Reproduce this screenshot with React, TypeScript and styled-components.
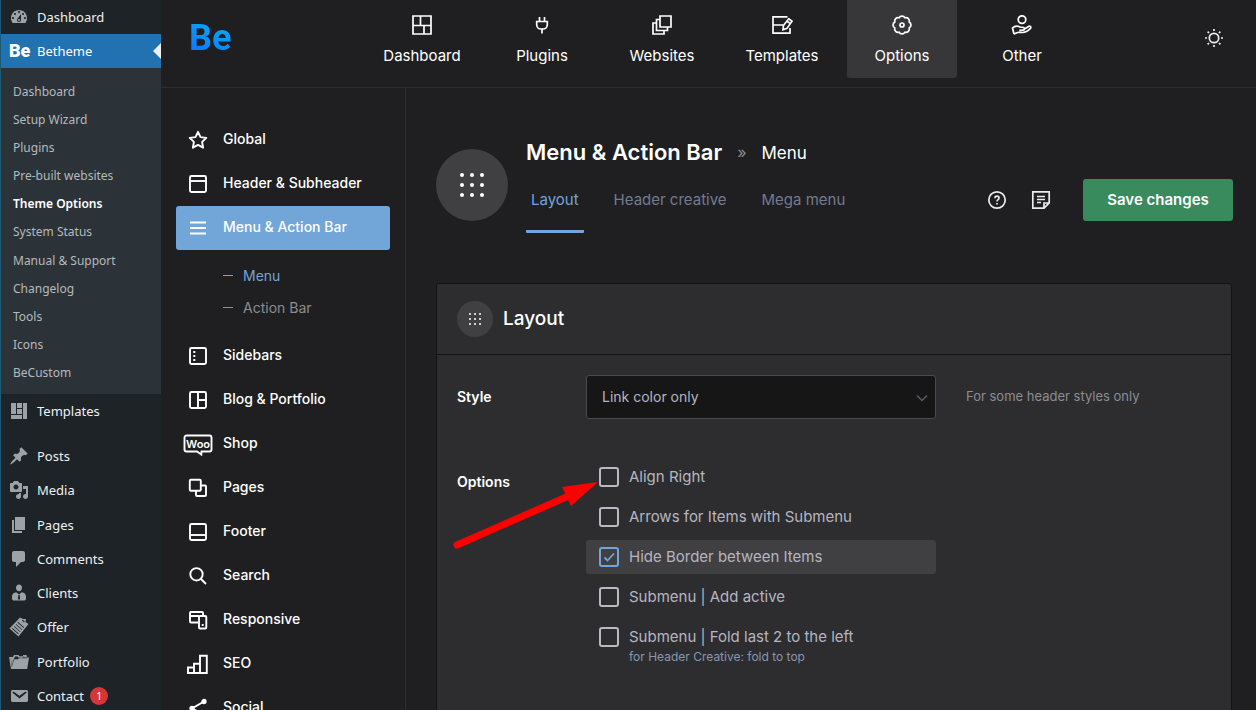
import React from "react";
import styled, { createGlobalStyle, css } from "styled-components";

const ui = `Inter, "Liberation Sans", sans-serif`;
const wp = `"Noto Sans", "Open Sans", sans-serif`;

const c = {
  bg: "#1f1f21",
  line: "#2c2c2e",
  panel: "#2d2d2f",
  panelLine: "#131315",
  raised: "#404042",
  blue: "#72a5d8",
  text: "#b6b5c1",
  muted: "#8c8c91",
};

const GlobalStyle = createGlobalStyle`
  * { box-sizing: border-box; }
  body { margin: 0; background: ${c.bg}; font-family: ${ui}; color: #fff; }
  ul { list-style: none; margin: 0; padding: 0; }
  a { color: inherit; text-decoration: none; }
  h1, h2, p { margin: 0; }
  button, select, input { font: inherit; margin: 0; }
  svg { display: block; flex: none; }
`;

const Shell = styled.div`
  display: flex;
  height: 100vh;
  overflow: hidden;
`;

/* ---------- WordPress admin menu ---------- */

const AdminMenu = styled.nav`
  flex: none;
  width: 161px;
  background: #1d2327;
  border-left: 1px solid #1b5a75;
  font-family: ${wp};
`;

const AdminGroup = styled.ul<{ $height?: number }>`
  display: grid;
  grid-auto-rows: 1fr;
  min-height: ${(p) => (p.$height ? `${p.$height}px` : "auto")};
`;

const AdminLink = styled.a<{ $active?: boolean }>`
  position: relative;
  display: flex;
  align-items: center;
  height: 34px;
  padding-left: 8px;
  gap: 8px;
  font-size: 13px;
  line-height: 18px;
  color: #f0f0f1;
  ${(p) =>
    p.$active &&
    css`
      background: #2271b1;
      color: #fff;
      &::after {
        content: "";
        position: absolute;
        right: 0;
        top: 9px;
        border: 8px solid transparent;
        border-left-width: 0;
        border-right-color: #f0f0f1;
      }
    `}
`;

const AdminIcon = styled.svg`
  width: 20px;
  height: 20px;
  fill: #9ca2a7;
`;

const AdminLogo = styled.span`
  width: 20px;
  font: 900 18px/20px Roboto, sans-serif;
`;

const SubMenu = styled(AdminGroup)`
  padding: 9px 0 7px;
  background: #2c3338;
`;

const SubLink = styled.a<{ $active?: boolean }>`
  display: flex;
  align-items: center;
  height: 100%;
  padding-left: 12px;
  font-size: 12px;
  color: ${(p) => (p.$active ? "#fff" : "#b4b9be")};
  font-weight: ${(p) => (p.$active ? 600 : 400)};
`;

const Spacer = styled.div`
  height: 11px;
`;

const Count = styled.span`
  width: 18px;
  height: 18px;
  margin-left: -2px;
  border-radius: 9px;
  background: #d63638;
  color: #fff;
  font-size: 11px;
  line-height: 18px;
  text-align: center;
`;

/* ---------- Theme header ---------- */

const Main = styled.div`
  flex: 1;
  min-width: 0;
`;

const Header = styled.header`
  display: flex;
  height: 88px;
  border-bottom: 1px solid ${c.line};
`;

const Brand = styled.a`
  flex: none;
  width: 206px;
  padding: 16px 0 0 28px;
  font: 700 36px/44px Roboto, sans-serif;
  span {
    background: linear-gradient(20deg, #0a7cff 20%, #04b0f8 90%);
    background-clip: text;
    -webkit-background-clip: text;
    color: transparent;
  }
`;

const TopNav = styled.nav`
  display: flex;
  gap: 10px;
`;

const TopLink = styled.a<{ $active?: boolean }>`
  display: flex;
  flex-direction: column;
  align-items: center;
  gap: 9px;
  width: 110px;
  height: 78px;
  padding-top: 13px;
  border-radius: 0 0 3px 3px;
  background: ${(p) => (p.$active ? "#373739" : "transparent")};
  font-size: 15px;
  line-height: 20px;
`;

const LineIcon = styled.svg<{ $weight?: number }>`
  width: 24px;
  height: 24px;
  fill: none;
  stroke: currentColor;
  stroke-width: ${(p) => p.$weight ?? 1.7};
  overflow: visible;
`;

const IconButton = styled.button`
  display: grid;
  place-items: center;
  width: 24px;
  height: 24px;
  padding: 0;
  border: 0;
  background: none;
  color: #ececee;
  cursor: pointer;
`;

const ThemeToggle = styled(IconButton)`
  margin: 26px 30px 0 auto;
`;

/* ---------- Options sidebar ---------- */

const Body = styled.div`
  display: flex;
  min-height: 100%;
`;

const Side = styled.nav`
  flex: none;
  width: 245px;
  padding: 30px 15px;
  border-right: 1px solid ${c.line};
`;

const SideLink = styled.a<{ $active?: boolean }>`
  display: grid;
  grid-template-columns: 44px 1fr;
  align-items: center;
  height: 44px;
  padding-right: 8px;
  border-radius: 3px;
  background: ${(p) => (p.$active ? c.blue : "transparent")};
  font-size: 14px;
  font-weight: 500;
  line-height: 20px;
  white-space: nowrap;
  svg {
    justify-self: center;
  }
  span {
    padding: 0 0 2px 3px;
  }
`;

const SideSub = styled.ul`
  padding: 10px 0 10px 47px;
`;

const SideSubLink = styled.a<{ $active?: boolean }>`
  display: flex;
  align-items: center;
  gap: 10px;
  height: 32px;
  padding-bottom: 1px;
  font-size: 14px;
  line-height: 20px;
  color: ${(p) => (p.$active ? c.blue : c.muted)};
  &::before {
    content: "";
    width: 10px;
    height: 1px;
    background: currentColor;
  }
`;

/* ---------- Content ---------- */

const Content = styled.main`
  flex: 1;
  min-width: 0;
  padding: 49px 24px 0 30px;
`;

const TitleBar = styled.div`
  display: flex;
  align-items: center;
  height: 96px;
`;

const Disc = styled.span<{ $size: number }>`
  display: grid;
  place-items: center;
  flex: none;
  width: ${(p) => p.$size}px;
  height: ${(p) => p.$size}px;
  border-radius: 50%;
  background: ${c.raised};
`;

const TitleText = styled.div`
  flex: 1;
  height: 96px;
  padding-left: 18px;
`;

const Crumbs = styled.h1`
  display: flex;
  align-items: center;
  gap: 15px;
  height: 30px;
  font-size: 22px;
  font-weight: 600;
  line-height: 28px;
  white-space: nowrap;
`;

const Separator = styled.span`
  color: ${c.muted};
  font-size: 16px;
  font-weight: 400;
`;

const Crumb = styled.span`
  padding-top: 1px;
  font-size: 17px;
  font-weight: 400;
`;

const Tabs = styled.div`
  display: flex;
  gap: 25px;
`;

const Tab = styled.a<{ $active?: boolean }>`
  height: 66px;
  padding: 23px 5px 0;
  border-bottom: 3px solid ${(p) => (p.$active ? c.blue : "transparent")};
  border-radius: 1px;
  color: ${(p) => (p.$active ? c.blue : "#737b90")};
  font-size: 15px;
  line-height: 20px;
  white-space: nowrap;
`;

const Actions = styled.div`
  display: flex;
  align-items: center;
  gap: 20px;
  padding-top: 30px;
  margin-right: -1px;
`;

const SaveButton = styled.button`
  width: 150px;
  height: 42px;
  margin-left: 10px;
  padding: 0 0 2px;
  border: 0;
  border-radius: 3px;
  background: #398a5d;
  color: #fff;
  font-size: 15px;
  font-weight: 600;
  cursor: pointer;
`;

const Card = styled.section`
  margin-top: 50px;
  min-height: 500px;
  border: 1px solid ${c.panelLine};
  border-radius: 3px;
  background: ${c.panel};
`;

const CardHead = styled.div`
  display: flex;
  align-items: center;
  gap: 10px;
  height: 71px;
  padding: 0 20px;
  border-bottom: 1px solid ${c.panelLine};
`;

const CardTitle = styled.h2`
  font-size: 19px;
  font-weight: 500;
  line-height: 24px;
`;

const Field = styled.div`
  position: relative;
  display: grid;
  grid-template-columns: 129px 350px 1fr;
  padding: 20px 20px 21px;
`;

const FieldName = styled.label`
  padding-top: 12px;
  font-size: 14px;
  font-weight: 600;
  line-height: 20px;
`;

const Hint = styled.p`
  padding: 11px 0 0 30px;
  color: ${c.muted};
  font-size: 13px;
  line-height: 20px;
`;

const SelectBox = styled.div`
  position: relative;
  height: 44px;
  svg {
    position: absolute;
    right: 7px;
    top: 16px;
    color: #5c5c62;
    pointer-events: none;
  }
`;

const Select = styled.select`
  appearance: none;
  width: 100%;
  height: 44px;
  padding: 0 30px 2px 15px;
  border: 1px solid #4a4a4d;
  border-radius: 3px;
  background: #161616;
  color: ${c.text};
  font-size: 14px;
`;

const Choices = styled.ul`
  display: grid;
  gap: 6px;
`;

const Choice = styled.label<{ $on?: boolean }>`
  display: flex;
  gap: 10px;
  min-height: 34px;
  padding: 7px 13px 0;
  border-radius: 3px;
  background: ${(p) => (p.$on ? c.raised : "transparent")};
  color: ${c.text};
  font-size: 15px;
  line-height: 20px;
  small {
    display: block;
    color: #8797b0;
    font-size: 12px;
  }
`;

const Tick = styled.span`
  position: relative;
  width: 20px;
  height: 20px;
  svg {
    position: absolute;
    inset: 0;
    color: ${c.blue};
    pointer-events: none;
  }
`;

const TickInput = styled.input`
  appearance: none;
  display: block;
  width: 20px;
  height: 20px;
  border: 2px solid #b9b8c3;
  border-radius: 3px;
  &:checked {
    border-color: ${c.blue};
  }
`;

const Pointer = styled.svg`
  position: absolute;
  left: 12px;
  top: 38px;
  width: 154px;
  height: 76px;
  pointer-events: none;
`;

/* ---------- Icons ---------- */

const adminPaths: Record<string, string> = {
  Dashboard:
    "M3.76 16h12.48c1.1-1.37 1.76-3.11 1.76-5 0-4.42-3.58-8-8-8s-8 3.58-8 8c0 1.89.66 3.63 1.76 5zM10 4c.55 0 1 .45 1 1s-.45 1-1 1-1-.45-1-1 .45-1 1-1zM6 6c.55 0 1 .45 1 1s-.45 1-1 1-1-.45-1-1 .45-1 1-1zm8 0c.55 0 1 .45 1 1s-.45 1-1 1-1-.45-1-1 .45-1 1-1zm-5.37 5.55L12 7v6c0 1.1-.9 2-2 2s-2-.9-2-2c0-.57.24-1.08.63-1.45zM4 10c.55 0 1 .45 1 1s-.45 1-1 1-1-.45-1-1 .45-1 1-1zm12 0c.55 0 1 .45 1 1s-.45 1-1 1-1-.45-1-1 .45-1 1-1zm-5 3c0-.55-.45-1-1-1s-1 .45-1 1 .45 1 1 1 1-.45 1-1z",
  Templates: "M2 2h5v11H2V2zm6 0h5v5H8V2zm6 0h4v16h-4V2zM8 8h5v5H8V8zm-6 6h11v4H2v-4z",
  Posts:
    "M10.44 3.02l1.82-1.82 6.36 6.35-1.83 1.82c-1.05-.68-2.48-.57-3.41.36l-.75.75c-.92.93-1.04 2.35-.35 3.41l-1.83 1.82-2.41-2.41-2.8 2.79c-.42.42-3.38 2.71-3.8 2.29s1.86-3.39 2.28-3.81l2.79-2.79L4.1 9.36l1.83-1.82c1.05.69 2.48.57 3.4-.36l.75-.75c.93-.92 1.05-2.35.36-3.41z",
  Media:
    "M13 11V4c0-.55-.45-1-1-1h-1.67L9 1H5L3.67 3H2c-.55 0-1 .45-1 1v7c0 .55.45 1 1 1h10c.55 0 1-.45 1-1zM7 4.5c1.38 0 2.5 1.12 2.5 2.5S8.38 9.5 7 9.5 4.5 8.38 4.5 7 5.62 4.5 7 4.5zM14 6h5v10.5c0 1.38-1.12 2.5-2.5 2.5S14 17.88 14 16.5s1.12-2.5 2.5-2.5c.17 0 .34.02.5.05V9h-3V6zm-4 8.05V13h2v3.5c0 1.38-1.12 2.5-2.5 2.5S7 17.88 7 16.5 8.12 14 9.5 14c.17 0 .34.02.5.05z",
  Pages: "M6 15V2h10v13H6zm-1 1h8v2H3V5h2v11z",
  Comments:
    "M5 2h9c1.1 0 2 .9 2 2v7c0 1.1-.9 2-2 2h-2l-5 5v-5H5c-1.1 0-2-.9-2-2V4c0-1.1.9-2 2-2z",
  Clients:
    "M10 1.500c1.800 0 3 1.300 3 3.200S11.800 8.300 10 8.300 7 6.600 7 4.700s1.200-3.200 3-3.200zM7.300 9.200L9.300 11h1.400l2-1.800c2.600.4 4.300 1.800 4.300 4.300v2.500c0 .9-1 1.500-2.200 1.500H5.200C4 17.500 3 16.900 3 16v-2.500c0-2.500 1.700-3.900 4.300-4.300zM9.400 11.700l-.5 4 1.100 1.300 1.100-1.300-.5-4z",
  Offer:
    "M11 .5l3 1.500h3l-.5 3L19.500 7 9.500 19.500.5 11.500zM3 11.700l6.200 5.500.5-.6-6.200-5.500zM4.800 9.600l6.200 5.500.5-.6-6.200-5.500zM6.600 7.500l6.200 5.500.5-.6L7.100 6.900zM8.400 5.400l6.200 5.500.5-.6-6.200-5.500zM13 3.500l2 2 .8-.8-2-2z",
  Portfolio:
    "M0 5h4l1-2h4.500l.8 1.200H14V3h3.500L18 5.500h2L18.200 17H2L0 5zm5.500.8L4.200 8l-1.300 6L2 7.200l-.4-1.500 1.200 9.800L5 7.300h4l.8-1.100H18V5.500h-2.800V4.600h-.8v1.200H9.600L8.800 4.500H6z",
  Contact:
    "M3.870 4h13.250C18.370 4 19 4.590 19 5.790v8.420c0 1.190-.63 1.790-1.880 1.790H3.870c-1.250 0-1.880-.6-1.880-1.790V5.790c0-1.200.63-1.790 1.880-1.790zm6.620 8.600l6.740-5.530c.24-.2.430-.66.130-1.070-.29-.41-.82-.42-1.170-.17l-5.700 3.860L4.800 5.830c-.35-.25-.88-.24-1.170.17-.3.410-.11.870.13 1.070z",
};

/* Eight round lobes with their joints on one circle. */
const cogJoints = Array.from({ length: 8 }, (_, i) => {
  const angle = ((22.5 + i * 45) * Math.PI) / 180;
  return `${(12 + 7.8 * Math.cos(angle)).toFixed(2)} ${(12 + 7.8 * Math.sin(angle)).toFixed(2)}`;
});
const cogPath =
  `M${cogJoints[7]}` + cogJoints.map((point) => `A3.4 3.4 0 0 1 ${point}`).join("") + "z";

const topIcons: Record<string, React.ReactNode> = {
  Dashboard: <path d="M3 3h18v18H3zM3 12.500h18M10.500 3v9.500M14 12.500V21" />,
  Plugins: <path d="M9.500 4v4.500M14.500 4v4.500M6.700 8.500h10.600v3.500a4.200 4.200 0 0 1-4.200 4h-2.200a4.200 4.200 0 0 1-4.200-4zM12 16v4.500" />,
  Websites: <path d="M10 3h11v11H10zM10 6.500H6.500v11h11V14M6.500 10H3v11h11v-3.500" />,
  Templates: (
    <path d="M17.500 3.800H3v16.400h17V15M3 12h10M18.700 5.800l3.300 2.400-5 7.200-4 1.400.4-4.200zM17 8.200l3.400 2.400" />
  ),
  Options: (
    <>
      <path d={cogPath} />
      <circle cx="12" cy="12" r="2" />
    </>
  ),
  Other: (
    <>
      <circle cx="12" cy="6.600" r="3.800" />
      <path d="M4 21l-1.500-6c2.200-2.200 4.800-2.400 7.500-1l3.500.5c1.500.4 1.200 2.500-.2 2.600l-4 .2M14.500 16l4-2.500c1.700-.8 3 .6 1.900 1.900-2.700 2.800-5.200 4.100-7.900 4.100-2.200 0-3.500-.5-5 0L4 21" />
    </>
  ),
};

const frame = <rect x="4" y="4" width="16" height="16" rx="1.500" />;

const sideIcons: Record<string, React.ReactNode> = {
  Global: <path d="M12 3.800l2.500 5.300 5.800.8-4.200 4 1 5.800L12 16.900l-5.100 2.800 1-5.800-4.200-4 5.800-.8z" strokeLinejoin="round" />,
  "Header & Subheader": <>{frame}<path d="M4 9h16" /></>,
  "Menu & Action Bar": <path d="M4 6.500h16M4 12h16M4 17.500h16" />,
  Sidebars: <>{frame}<path d="M7.300 8h2M7.300 12h2M7.300 16h2" /></>,
  "Blog & Portfolio": <>{frame}<path d="M12 4v16M12 12h8" /></>,
  Shop: (
    <>
      <path d="M.500 3.500h23a2 2 0 0 1 2 2v12a2 2 0 0 1-2 2h-8l-.2 3-4.300-3H.500a2 2 0 0 1-2-2v-12a2 2 0 0 1 2-2z" />
      <text x="12" y="15.500" textAnchor="middle" fill="currentColor" stroke="none" fontFamily="Inter, sans-serif" fontSize="11" fontWeight="600">
        Woo
      </text>
    </>
  ),
  Pages: (
    <>
      <rect x="3.800" y="3.800" width="11" height="11" rx="1" />
      <path d="M15 9.500h4a1 1 0 0 1 1 1V19a1 1 0 0 1-1 1h-8a1 1 0 0 1-1-1v-4" />
    </>
  ),
  Footer: <>{frame}<path d="M4 15h16" /></>,
  Search: (
    <>
      <circle cx="10.500" cy="10.300" r="6.200" />
      <path d="M15 15l5 5" />
    </>
  ),
  Responsive: (
    <>
      <path d="M12.500 14.500H5a1 1 0 0 1-1-1V5a1 1 0 0 1 1-1h11a1 1 0 0 1 1 1v3M4 8h9" />
      <rect x="13" y="8" width="7.300" height="12.500" rx="1" />
      <path d="M16.700 16v2" />
    </>
  ),
  SEO: <path d="M2 15.500h6V21H2zM8 11.800h6V21H8zM14 3.800h6.800V21H14z" />,
  Social: (
    <>
      <path d="M18 5.500L6 12.500l12 6" />
      <circle cx="18" cy="5.500" r="1.700" fill="currentColor" />
      <circle cx="6" cy="12.500" r="1.700" fill="currentColor" />
      <circle cx="18" cy="18.500" r="1.700" fill="currentColor" />
    </>
  ),
};

const Dots = ({ step, r }: { step: number; r: number }) => {
  const size = step * 2 + r * 2;
  return (
    <svg width={size} height={size} fill="#fff" aria-hidden="true">
      {[0, 1, 2].map((y) =>
        [0, 1, 2].map((x) => <circle key={`${x}${y}`} cx={r + x * step} cy={r + y * step} r={r} />)
      )}
    </svg>
  );
};

const AdminItem = ({ name, count }: { name: string; count?: number }) => (
  <li>
    <AdminLink href="#">
      <AdminIcon viewBox="0 0 20 20" fillRule="evenodd" aria-hidden="true">
        <path d={adminPaths[name]} />
      </AdminIcon>
      {name}
      {count && <Count>{count}</Count>}
    </AdminLink>
  </li>
);

const SideItem = ({ name, active }: { name: string; active?: boolean }) => (
  <li>
    <SideLink href="#" $active={active}>
      <LineIcon viewBox="0 0 24 24" $weight={1.9} aria-hidden="true">
        {sideIcons[name]}
      </LineIcon>
      <span>{name}</span>
    </SideLink>
  </li>
);

const submenu = [
  "Dashboard", "Setup Wizard", "Plugins", "Pre-built websites", "Theme Options", "System Status",
  "Manual & Support", "Changelog", "Tools", "Icons", "BeCustom",
];

const choices: { name: string; note?: string; on?: boolean }[] = [
  { name: "Align Right" },
  { name: "Arrows for Items with Submenu" },
  { name: "Hide Border between Items", on: true },
  { name: "Submenu | Add active" },
  { name: "Submenu | Fold last 2 to the left", note: "for Header Creative: fold to top" },
];

export default function App() {
  return (
    <Shell>
      <GlobalStyle />
      <AdminMenu aria-label="Admin">
        <AdminGroup>
          <AdminItem name="Dashboard" />
          <li>
            <AdminLink href="#" $active>
              <AdminLogo>Be</AdminLogo>
              Betheme
            </AdminLink>
          </li>
        </AdminGroup>
        <SubMenu $height={326}>
          {submenu.map((name) => (
            <li key={name}>
              <SubLink href="#" $active={name === "Theme Options"}>{name}</SubLink>
            </li>
          ))}
        </SubMenu>
        <AdminGroup>
          <AdminItem name="Templates" />
        </AdminGroup>
        <Spacer />
        <AdminGroup $height={274}>
          {["Posts", "Media", "Pages", "Comments", "Clients", "Offer", "Portfolio"].map((name) => (
            <AdminItem key={name} name={name} />
          ))}
          <AdminItem name="Contact" count={1} />
        </AdminGroup>
      </AdminMenu>

      <Main>
        <Header>
          <Brand href="#"><span>Be</span></Brand>
          <TopNav aria-label="Theme">
            {Object.keys(topIcons).map((name) => (
              <TopLink key={name} href="#" $active={name === "Options"}>
                <LineIcon viewBox="0 0 24 24" aria-hidden="true">{topIcons[name]}</LineIcon>
                {name}
              </TopLink>
            ))}
          </TopNav>
          <ThemeToggle aria-label="Toggle light mode">
            <LineIcon viewBox="0 0 24 24" aria-hidden="true">
              <circle cx="12" cy="12" r="4.700" />
              <path d="M12 3v2M12 19v2M3 12h2M19 12h2M5.600 5.600L7 7M17 17l1.400 1.400M5.600 18.400L7 17M17 7l1.400-1.400" />
            </LineIcon>
          </ThemeToggle>
        </Header>

        <Body>
          <Side aria-label="Theme options">
            <ul>
              <SideItem name="Global" />
              <SideItem name="Header & Subheader" />
              <SideItem name="Menu & Action Bar" active />
              <li>
                <SideSub>
                  <li><SideSubLink href="#" $active>Menu</SideSubLink></li>
                  <li><SideSubLink href="#">Action Bar</SideSubLink></li>
                </SideSub>
              </li>
              {["Sidebars", "Blog & Portfolio", "Shop", "Pages", "Footer", "Search", "Responsive", "SEO", "Social"].map(
                (name) => <SideItem key={name} name={name} />
              )}
            </ul>
          </Side>

          <Content>
            <TitleBar>
              <Disc $size={72}><Dots step={10} r={2} /></Disc>
              <TitleText>
                <Crumbs>
                  Menu &amp; Action Bar
                  <Separator>»</Separator>
                  <Crumb>Menu</Crumb>
                </Crumbs>
                <Tabs>
                  <Tab href="#" $active>Layout</Tab>
                  <Tab href="#">Header creative</Tab>
                  <Tab href="#">Mega menu</Tab>
                </Tabs>
              </TitleText>
              <Actions>
                <IconButton aria-label="Help">
                  <LineIcon viewBox="0 0 24 24" aria-hidden="true">
                    <circle cx="12" cy="12" r="8.200" />
                    <path d="M10 10.200c0-2.700 4-2.700 4 0 0 1.400-2 1.500-2 3.200M12 15v1.600" />
                  </LineIcon>
                </IconButton>
                <IconButton aria-label="Notes">
                  <LineIcon viewBox="0 0 24 24" aria-hidden="true">
                    <path d="M3.800 3.800h16.400v11L15 20.200H3.800zM20 15h-5v5M8 8.500h8M8 11.500h8M8 14.500h4" />
                  </LineIcon>
                </IconButton>
                <SaveButton type="button">Save changes</SaveButton>
              </Actions>
            </TitleBar>

            <Card>
              <CardHead>
                <Disc $size={36}><Dots step={5} r={1} /></Disc>
                <CardTitle>Layout</CardTitle>
              </CardHead>
              <Field>
                <FieldName htmlFor="style">Style</FieldName>
                <SelectBox>
                  <Select id="style" defaultValue="link">
                    <option value="link">Link color only</option>
                  </Select>
                  <svg width="14" height="14" fill="none" stroke="currentColor" strokeWidth="1.5" aria-hidden="true">
                    <path d="M2 4.500l5 5 5-5" />
                  </svg>
                </SelectBox>
                <Hint>For some header styles only</Hint>
              </Field>
              <Field role="group" aria-labelledby="options-name">
                <FieldName as="span" id="options-name">Options</FieldName>
                <Choices>
                  {choices.map(({ name, note, on }) => (
                    <li key={name}>
                      <Choice $on={on}>
                        <Tick>
                          <TickInput type="checkbox" defaultChecked={on} />
                          {on && (
                            <svg width="20" height="20" fill="none" stroke="currentColor" strokeWidth="1.800" aria-hidden="true">
                              <path d="M5.500 10.500l3 3L15 6.500" />
                            </svg>
                          )}
                        </Tick>
                        <span>
                          {name}
                          {note && <small>{note}</small>}
                        </span>
                      </Choice>
                    </li>
                  ))}
                </Choices>
                <Pointer viewBox="0 0 154 76" aria-hidden="true">
                  <path d="M8 67L122 17" stroke="#f00" strokeWidth="7" strokeLinecap="round" />
                  <path d="M149 4L113 9l9 19z" fill="#f00" />
                </Pointer>
              </Field>
            </Card>
          </Content>
        </Body>
      </Main>
    </Shell>
  );
}
